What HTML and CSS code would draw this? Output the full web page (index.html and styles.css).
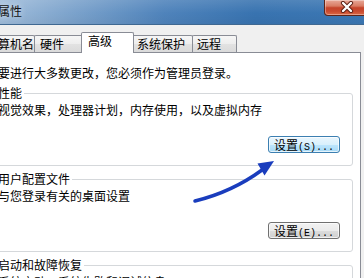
FILE: index.html
```html
<!DOCTYPE html>
<html lang="zh-CN">
<head>
<meta charset="utf-8">
<title>系统属性</title>
<link rel="stylesheet" href="styles.css">
</head>
<body>
<div class="window">
  <header class="titlebar">
    <span class="title">系统属性</span>
    <button class="close" aria-label="关闭">
      <svg width="14" height="12" viewBox="0 0 14 12">
        <path d="M3 2 L11 10 M11 2 L3 10" stroke="#5a1d12" stroke-width="4.2" stroke-linecap="round" fill="none"/>
        <path d="M3 2 L11 10 M11 2 L3 10" stroke="#ffffff" stroke-width="2.4" stroke-linecap="round" fill="none"/>
      </svg>
    </button>
  </header>
  <nav class="tabs">
    <span class="tab tab-name">计算机名</span>
    <span class="tab tab-hw">硬件</span>
    <span class="tab tab-adv active">高级</span>
    <span class="tab tab-sys">系统保护</span>
    <span class="tab tab-remote">远程</span>
  </nav>
  <main class="panel">
    <p class="note">要进行大多数更改，您必须作为管理员登录。</p>
    <fieldset class="group">
      <legend>性能</legend>
      <p class="desc">视觉效果，处理器计划，内存使用，以及虚拟内存</p>
      <div class="actions"><button class="btn hot">设置<span class="mono">(S)...</span></button></div>
    </fieldset>
    <fieldset class="group">
      <legend>用户配置文件</legend>
      <p class="desc">与您登录有关的桌面设置</p>
      <div class="actions"><button class="btn">设置<span class="mono">(E)...</span></button></div>
    </fieldset>
    <fieldset class="group">
      <legend>启动和故障恢复</legend>
      <p class="desc">系统启动、系统失败和调试信息</p>
    </fieldset>
  </main>
  <svg class="arrow" width="364" height="278" viewBox="0 0 364 278">
    <path d="M195 201 Q232 192 262 170" fill="none" stroke="#1a3dbd" stroke-width="3.5" stroke-linecap="round"/>
    <polygon points="274,161 257.5,163.5 264.5,175.5" fill="#1a3dbd"/>
  </svg>
</div>
</body>
</html>
```
FILE: styles.css
```css
* { box-sizing: border-box; }
html, body { margin: 0; padding: 0; }
body {
  width: 364px;
  height: 278px;
  overflow: hidden;
  background: #f0f0f0;
  font-family: "Noto Sans CJK SC", "Noto Sans", sans-serif;
  font-size: 12px;
  color: #000;
}
.window {
  position: relative;
  width: 364px;
  height: 278px;
  display: flex;
  flex-direction: column;
}
.titlebar {
  flex: none;
  height: 25px;
  display: flex;
  align-items: flex-start;
  border-bottom: 1px solid #3f6891;
  background:
    linear-gradient(to bottom, rgba(255,255,255,0.12), rgba(255,255,255,0) 55%, rgba(0,0,0,0.04)),
    linear-gradient(to right, #9fbcda 0%, #7fa5cd 18%, #4f83bb 45%, #3873b0 70%, #3b77b3 100%);
}
.title {
  margin-left: -26px;
  line-height: 22px;
  font-size: 12px;
  color: #111;
  white-space: nowrap;
  text-shadow: 0 0 6px rgba(255,255,255,0.75);
}
.close {
  margin-left: auto;
  margin-right: -5px;
  width: 45px;
  height: 16px;
  padding: 0;
  border: 1px solid #5e2418;
  border-top: none;
  border-radius: 0 0 4px 4px;
  background: linear-gradient(to bottom, #e8a898 0%, #d97c64 40%, #c5432a 52%, #c94a2f 75%, #dc6a45 100%);
  box-shadow: inset 0 0 0 1px rgba(255,255,255,0.35);
  display: flex;
  align-items: center;
  justify-content: center;
}
.close svg { display: block; margin-top: -1px; }
.tabs {
  flex: none;
  height: 27px;
  display: flex;
  align-items: flex-end;
  margin-left: -20px;
  position: relative;
  z-index: 1;
}
.tab {
  flex: none;
  height: 17px;
  border: 1px solid #898c95;
  border-bottom: none;
  border-radius: 2px 2px 0 0;
  line-height: 16px;
  white-space: nowrap;
  background: linear-gradient(to bottom, #f6f6f6 0%, #ededed 50%, #e2e2e2 51%, #dadada 100%);
  padding-left: 5px;
}
.tab-name { width: 55px; }
.tab-hw { width: 50px; margin-left: -1px; }
.tab-adv { width: 53px; margin-left: -3px; margin-right: -3px; padding-left: 6px; }
.tab-sys { width: 62px; }
.tab-remote { width: 45px; margin-left: -1px; padding-left: 4px; }
.tab.active {
  height: 21px;
  margin-bottom: -1px;
  background: #fff;
  position: relative;
  z-index: 2;
}
.panel {
  flex: 1;
  display: block;
  background: #fff;
  border-top: 1px solid #898c95;
  border-right: 1px solid #898c95;
  margin-right: 3px;
  padding: 12px 0 0 0;
  overflow: hidden;
}
.note {
  margin: 0 0 5px -2px;
  line-height: 16px;
  white-space: nowrap;
}
.group {
  margin: 0 7px 0 -12px;
  padding: 2px 12px 12px 9px;
  border: 1px solid #d5d8db;
  border-radius: 3px;
  min-width: 0;
}
.group + .group { margin-top: 6px; }
.group legend {
  padding: 0 2px 0 0;
  line-height: 14px;
  white-space: nowrap;
}
.desc {
  margin: 0;
  line-height: 16px;
  white-space: nowrap;
}
.actions {
  margin-top: 18px;
  display: flex;
  justify-content: flex-end;
}
.btn {
  width: 72px;
  height: 17px;
  padding: 0;
  font-family: "Noto Sans CJK SC", sans-serif;
  font-size: 12px;
  line-height: 15px;
  color: #000;
  border: 1px solid #707070;
  border-radius: 3px;
  background: linear-gradient(to bottom, #f2f2f2 0%, #ebebeb 50%, #dddddd 51%, #cfcfcf 100%);
  box-shadow: inset 0 0 0 1px rgba(255,255,255,0.7);
  white-space: nowrap;
}
.btn.hot {
  border-color: #3c7fb1;
  background: linear-gradient(to bottom, #eaf6fd 0%, #d9f0fc 50%, #bee6fd 51%, #a7d9f5 100%);
}
.mono {
  font-family: "Liberation Mono", monospace;
  font-size: 10px;
}
.arrow {
  position: absolute;
  left: 0;
  top: 0;
  pointer-events: none;
  z-index: 3;
}
```
